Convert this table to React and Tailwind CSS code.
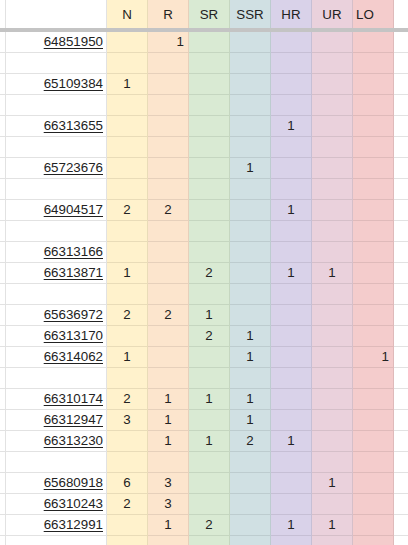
const cols = [
  { key: 'N', bg: 'bg-[#fff2cc]', line: 'border-[#e9dcb8]' },
  { key: 'R', bg: 'bg-[#fce5cd]', line: 'border-[#e6d0bb]' },
  { key: 'SR', bg: 'bg-[#d9ead3]', line: 'border-[#c5d6c0]' },
  { key: 'SSR', bg: 'bg-[#d0e0e3]', line: 'border-[#bdcccf]' },
  { key: 'HR', bg: 'bg-[#d9d2e9]', line: 'border-[#c6bfd5]' },
  { key: 'UR', bg: 'bg-[#ead1dc]', line: 'border-[#d5bfc9]' },
  { key: 'LO', bg: 'bg-[#f4cccc]', line: 'border-[#dfbaba]' },
];

// values per row: N, R, SR, SSR, HR, UR, LO ; "r" suffix = right aligned number
const rows = [
  ['64851950', ['', '1r', '', '', '', '', '']],
  null,
  ['65109384', ['1', '', '', '', '', '', '']],
  null,
  ['66313655', ['', '', '', '', '1', '', '']],
  null,
  ['65723676', ['', '', '', '1', '', '', '']],
  null,
  ['64904517', ['2', '2', '', '', '1', '', '']],
  null,
  ['66313166', ['', '', '', '', '', '', '']],
  ['66313871', ['1', '', '2', '', '1', '1', '']],
  null,
  ['65636972', ['2', '2', '1', '', '', '', '']],
  ['66313170', ['', '', '2', '1', '', '', '']],
  ['66314062', ['1', '', '', '1', '', '', '1r']],
  null,
  ['66310174', ['2', '1', '1', '1', '', '', '']],
  ['66312947', ['3', '1', '', '1', '', '', '']],
  ['66313230', ['', '1', '1', '2', '1', '', '']],
  null,
  ['65680918', ['6', '3', '', '', '', '1', '']],
  ['66310243', ['2', '3', '', '', '', '', '']],
  ['66312991', ['', '1', '2', '', '1', '1', '']],
  null,
];

function Row({ id, vals, h = 'h-[21px]' }) {
  return (
    <div className={`flex ${h}`}>
      <div className="w-[6px] shrink-0 border-r border-b border-[#e2e2e2]" />
      <div className="w-[101px] shrink-0 border-r border-b border-[#e2e2e2] flex items-center justify-end pr-[3px]">
        {id && <span className="underline underline-offset-2 text-[#222]">{id}</span>}
      </div>
      {cols.map((c, i) => {
        const v = vals ? vals[i] : '';
        const right = v.endsWith('r');
        return (
          <div
            key={c.key}
            className={`w-[41px] shrink-0 border-r border-b ${c.bg} ${c.line} flex items-center ${right ? 'justify-end pr-[4px]' : 'justify-center'}`}
          >
            {v.replace('r', '')}
          </div>
        );
      })}
      <div className="flex-1 border-b border-[#e2e2e2]" />
    </div>
  );
}

export default function App() {
  return (
    <div className="w-[408px] h-[545px] overflow-hidden bg-white text-[13.33px] text-[#222] font-['Liberation_Sans',Arial,sans-serif]">
      {/* header */}
      <div className="flex h-[28px]">
        <div className="w-[6px] shrink-0 border-r border-[#e2e2e2]" />
        <div className="w-[101px] shrink-0 border-r border-[#e2e2e2]" />
        {cols.map((c) => (
          <div
            key={c.key}
            className={`w-[41px] shrink-0 border-r ${c.bg} ${c.line} flex items-center ${c.key === 'LO' ? 'justify-start pl-[3px]' : 'justify-center'} pt-[2px]`}
          >
            {c.key}
          </div>
        ))}
        <div className="flex-1" />
      </div>
      <div className="h-[4px] bg-[#c4c4c4]" />
      {rows.map((r, i) => (
        <Row key={i} id={r ? r[0] : null} vals={r ? r[1] : null} />
      ))}
    </div>
  );
}
